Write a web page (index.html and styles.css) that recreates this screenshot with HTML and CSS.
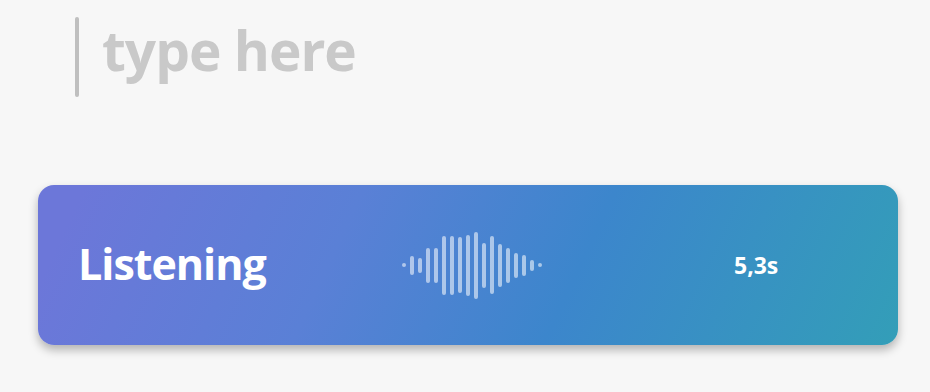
FILE: index.html
```html
<!DOCTYPE html>
<html lang="en">
<head>
    <meta charset="UTF-8">
    <title>Voice input</title>
    <link rel="stylesheet" href="styles.css">
</head>
<body>
    <div class="input">
        <span class="caret"></span>
        <span class="placeholder">type here</span>
    </div>
    <div class="card">
        <div class="label">Listening</div>
        <div class="wave">
            <span class="bar" style="height:4px"></span>
            <span class="bar" style="height:19px"></span>
            <span class="bar" style="height:15px"></span>
            <span class="bar" style="height:35px"></span>
            <span class="bar" style="height:35px"></span>
            <span class="bar" style="height:59px"></span>
            <span class="bar" style="height:59px"></span>
            <span class="bar" style="height:56px"></span>
            <span class="bar" style="height:61px"></span>
            <span class="bar" style="height:67px"></span>
            <span class="bar" style="height:45px"></span>
            <span class="bar" style="height:58px"></span>
            <span class="bar" style="height:43px"></span>
            <span class="bar" style="height:35px"></span>
            <span class="bar" style="height:25px"></span>
            <span class="bar" style="height:21px"></span>
            <span class="bar" style="height:11px"></span>
            <span class="bar" style="height:4px"></span>
        </div>
        <div class="time">5,3s</div>
    </div>
</body>
</html>
```

FILE: styles.css
```css
body {
    margin: 0;
    padding: 0;
    background: #f7f7f7;
    font-family: 'Open Sans', sans-serif;
    width: 930px;
    height: 392px;
}
.input {
    display: flex;
    align-items: center;
    padding: 17px 0 0 75px;
    height: 80px;
}
.caret {
    width: 4px;
    height: 80px;
    border-radius: 2px;
    background: #bfbfbf;
}
.placeholder {
    margin: 0 0 16px 23px;
    font-size: 55px;
    font-weight: 700;
    color: #c9c9c9;
    letter-spacing: -1px;
}
.card {
    margin: 88px 0 0 38px;
    width: 860px;
    height: 160px;
    border-radius: 16px;
    background: linear-gradient(115deg, #6c77d9 5%, #5a80d6 35%, #3c86cc 62%, #339eb8 100%);
    box-shadow: 0 5px 10px rgba(0, 0, 0, 0.28);
    display: grid;
    grid-template-columns: 322px 334px auto;
    align-items: center;
    padding-left: 40px;
    box-sizing: border-box;
}
.label {
    color: white;
    font-size: 43px;
    font-weight: 700;
    letter-spacing: -1px;
    margin-bottom: 3px;
}
.wave {
    display: flex;
    align-items: center;
    gap: 4px;
    height: 70px;
    margin-left: 2px;
}
.bar {
    width: 4px;
    border-radius: 2px;
    background: rgba(255, 255, 255, 0.55);
}
.time {
    color: white;
    font-size: 23px;
    font-weight: 700;
}
```
